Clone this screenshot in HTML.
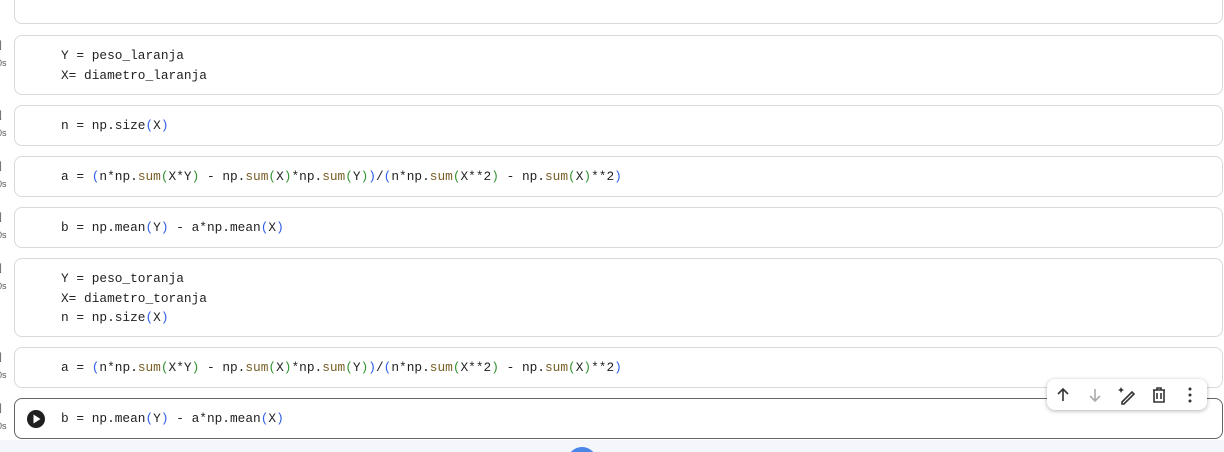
<!DOCTYPE html>
<html style="overflow:hidden;width:1224px;height:452px"><head><style>
body{margin:0;width:1224px;height:452px;background:#fff;position:relative;overflow:hidden;font-family:"Liberation Mono",monospace;}
.cell{position:absolute;left:14px;width:1209px;border:1px solid #d9d9d9;border-radius:8px;box-sizing:border-box;background:#fff;overflow:hidden}
.code{position:absolute;left:46px;font-size:12.8px;line-height:19.5px;color:#1f1f1f;white-space:pre;}
.g{position:absolute;left:-3px;font-family:"Liberation Sans",sans-serif;font-size:9px;color:#555;}
.k{position:absolute;left:-1px;font-family:"Liberation Sans",sans-serif;font-size:10px;color:#555;}
.b{color:#2f5de8}.f{color:#795e26}.n{color:#319331}
</style></head><body>
<div class="cell" style="top:-10px;height:34px"></div>
<div class="k" style="top:40px">]</div><div class="g" style="top:58px">0s</div>
<div class="cell" style="top:35px;height:60px"><div class="code" style="top:10px">Y = peso_laranja
X= diametro_laranja</div></div>
<div class="k" style="top:110px">]</div><div class="g" style="top:128px">0s</div>
<div class="cell" style="top:105px;height:41px"><div class="code" style="top:10px">n = np.size<span class="b">(</span>X<span class="b">)</span></div></div>
<div class="k" style="top:161px">]</div><div class="g" style="top:179px">0s</div>
<div class="cell" style="top:156px;height:41px"><div class="code" style="top:10px">a = <span class="b">(</span>n*np.<span class="f">sum</span><span class="n">(</span>X*Y<span class="n">)</span> - np.<span class="f">sum</span><span class="n">(</span>X<span class="n">)</span>*np.<span class="f">sum</span><span class="n">(</span>Y<span class="n">)</span><span class="b">)</span>/<span class="b">(</span>n*np.<span class="f">sum</span><span class="n">(</span>X**2<span class="n">)</span> - np.<span class="f">sum</span><span class="n">(</span>X<span class="n">)</span>**2<span class="b">)</span></div></div>
<div class="k" style="top:212px">]</div><div class="g" style="top:230px">0s</div>
<div class="cell" style="top:207px;height:41px"><div class="code" style="top:10px">b = np.mean<span class="b">(</span>Y<span class="b">)</span> - a*np.mean<span class="b">(</span>X<span class="b">)</span></div></div>
<div class="k" style="top:263px">]</div><div class="g" style="top:281px">0s</div>
<div class="cell" style="top:258px;height:79px"><div class="code" style="top:10px">Y = peso_toranja
X= diametro_toranja
n = np.size<span class="b">(</span>X<span class="b">)</span></div></div>
<div class="k" style="top:352px">]</div><div class="g" style="top:370px">0s</div>
<div class="cell" style="top:347px;height:41px"><div class="code" style="top:10px">a = <span class="b">(</span>n*np.<span class="f">sum</span><span class="n">(</span>X*Y<span class="n">)</span> - np.<span class="f">sum</span><span class="n">(</span>X<span class="n">)</span>*np.<span class="f">sum</span><span class="n">(</span>Y<span class="n">)</span><span class="b">)</span>/<span class="b">(</span>n*np.<span class="f">sum</span><span class="n">(</span>X**2<span class="n">)</span> - np.<span class="f">sum</span><span class="n">(</span>X<span class="n">)</span>**2<span class="b">)</span></div></div>
<div class="k" style="top:403px">]</div><div class="g" style="top:421px">0s</div>
<div class="cell" style="top:398px;height:41px;border-color:#666"><svg style="position:absolute;left:11px;top:10px" width="20" height="20"><circle cx="10" cy="10" r="9" fill="#1f1f1f"/><path d="M7.5 5.5L14.5 10L7.5 14.5Z" fill="#fff"/></svg><div class="code" style="top:10px">b = np.mean<span class="b">(</span>Y<span class="b">)</span> - a*np.mean<span class="b">(</span>X<span class="b">)</span></div></div>
<div style="position:absolute;left:0;top:440px;width:1224px;height:12px;background:#f5f6fc;overflow:hidden"><div style="position:absolute;left:567px;top:7px;width:30px;height:30px;border-radius:50%;background:#4a86e8"></div></div>
<div style="position:absolute;left:1047px;top:379px;width:160px;height:31px;background:#fff;border-radius:8px;box-shadow:0 1px 4px rgba(0,0,0,.3)">
<svg width="160" height="31" fill="none" stroke-width="1.6">
<path d="M16 22V10M11 15l5-5 5 5" stroke="#333"/>
<path d="M48 10v12M43 17l5 5 5-5" stroke="#aaa"/>
<path d="M75 23l10-10 2 2-10 10h-2z" stroke="#333"/><path d="M74 8l1 2 2 1-2 1-1 2-1-2-2-1 2-1z" fill="#333" stroke="none"/>
<path d="M106 11h12M110 11V9h4v2M107 11v12h10V11M110 14v6M114 14v6" stroke="#333"/>
<circle cx="143" cy="10" r="1.5" fill="#333" stroke="none"/><circle cx="143" cy="16" r="1.5" fill="#333" stroke="none"/><circle cx="143" cy="22" r="1.5" fill="#333" stroke="none"/>
</svg></div>
</body></html>
